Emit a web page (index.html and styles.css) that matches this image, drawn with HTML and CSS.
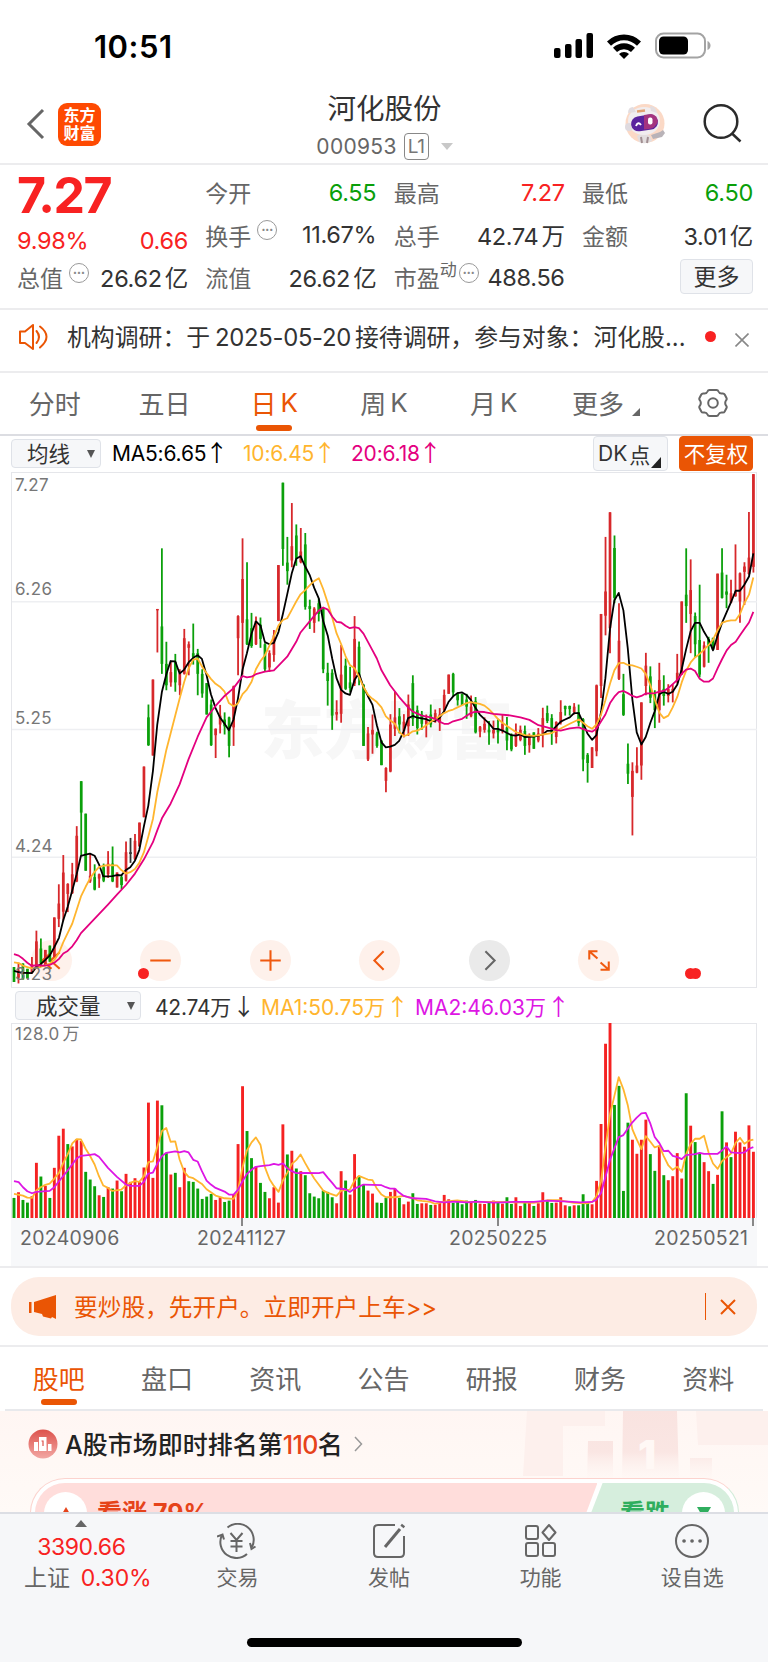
FILE: index.html
```html
<!DOCTYPE html>
<html lang="zh-CN">
<head>
    <meta charset="UTF-8">
    <meta name="viewport" content="width=device-width, initial-scale=1.0">
    <title>河化股份 000953</title>
    <link rel="stylesheet" href="styles.css">
</head>
<body>
    <!-- Status bar -->
    <div class="status-bar">
        <span class="status-time">10:51</span>
        <svg class="status-icons" width="160" height="28" viewBox="0 0 160 28">
            <rect x="3" y="17" width="6.500" height="10" rx="2"/>
            <rect x="14" y="13" width="6.500" height="14" rx="2"/>
            <rect x="24.500" y="8" width="6.500" height="19" rx="2"/>
            <rect x="35.500" y="2" width="6.500" height="25" rx="2"/>
            <path d="M56 10.500a24 24 0 0 1 34 0l-4 4.200a18.500 18.500 0 0 0-26 0z"/>
            <path d="M62 16.800a15.500 15.500 0 0 1 22 0l-4 4.200a10 10 0 0 0-14 0z"/>
            <path d="M68 23a7 7 0 0 1 10 0l-5 5z"/>
            <rect x="105" y="2.500" width="49" height="24" rx="7.500" fill="none" stroke="#a3a3a3" stroke-width="2"/>
            <rect x="108" y="5.500" width="29" height="18" rx="4.500"/>
            <path d="M156.500 10v9q3-1.500 3-4.500t-3-4.500z" fill="#a3a3a3"/>
        </svg>
    </div>

    <!-- Header -->
    <header class="header">
        <div class="header-left">
            <svg width="20" height="32" viewBox="0 0 20 32"><path d="M17 2L3 16l14 14" fill="none" stroke="#666" stroke-width="3"/></svg>
            <div class="logo"><span>东方</span><span>财富</span></div>
        </div>
        <div class="header-title">
            <div class="stock-name">河化股份</div>
            <div class="stock-code">000953 <span class="level">L1</span><i class="caret"></i></div>
        </div>
        <div class="header-right">
            <svg width="44" height="44" viewBox="0 0 44 44">
                <circle cx="22" cy="21.500" r="19.500" fill="#fbd9c6"/>
                <path d="M14 34q6-5 13 0l2 5q-7 4-13 1z" fill="#e3dedf"/>
                <path d="M28 33l9-3 3-2 2 3-3 4-9 2z" fill="#b9b3b8"/>
                <path d="M18 35l1 6m6-6l-1 6" stroke="#a18f92" stroke-width="2"/>
                <ellipse cx="21" cy="19" rx="16" ry="14" fill="#f1edef"/>
                <circle cx="6" cy="25" r="4" fill="#dfdadf"/>
                <path d="M5 11q0-6 5-6l3 5zM27 4q6 0 7 7l-6-2z" fill="#e3dde0"/>
                <rect x="8" y="13.500" width="27" height="15" rx="7.500" fill="#5a239e" transform="rotate(-9 21 21)"/>
                <path d="M21 13l7-1q6 1 7 7-2 7-9 8l-5 .5z" fill="#a4347f"/>
                <path d="M13 24q2-5 5-1" fill="none" stroke="#fff" stroke-width="2"/>
                <rect x="25" y="15.500" width="4.500" height="7" rx="2" fill="#fff"/>
                <path d="M14 9.500l8-1" stroke="#e2a070" stroke-width="2.500"/>
            </svg>
            <svg width="42" height="42" viewBox="0 0 42 42" fill="none" stroke="#2b2b2b" stroke-width="2.500"><circle cx="20" cy="18.500" r="16.300"/><path d="M31 30.500l8.500 8"/></svg>
        </div>
    </header>

    <!-- Quote -->
    <section class="quote">
        <div class="quote-main">
            <div class="price">7.27</div>
            <div class="cell up"><span>9.98%</span><span>0.66</span></div>
            <div class="cell"><label>总值<i class="tip">•••</i></label><span>26.62<b>亿</b></span></div>
        </div>
        <div class="quote-col">
            <div class="cell"><label>今开</label><span class="down">6.55</span></div>
            <div class="cell"><label>换手<i class="tip">•••</i></label><span>11.67%</span></div>
            <div class="cell"><label>流值</label><span>26.62<b>亿</b></span></div>
        </div>
        <div class="quote-col">
            <div class="cell"><label>最高</label><span class="up">7.27</span></div>
            <div class="cell"><label>总手</label><span>42.74<b>万</b></span></div>
            <div class="cell"><label>市盈<sup>动</sup><i class="tip near">•••</i></label><span>488.56</span></div>
        </div>
        <div class="quote-col">
            <div class="cell"><label>最低</label><span class="down">6.50</span></div>
            <div class="cell"><label>金额</label><span>3.01<b>亿</b></span></div>
            <div class="cell more-cell"><button class="more-btn">更多</button></div>
        </div>
    </section>

    <!-- News -->
    <div class="news">
        <svg width="32" height="28" viewBox="0 0 32 28" fill="none" stroke="#ea5504" stroke-width="2" stroke-linejoin="round"><path d="M2 8.500h5L15 2v24l-8-6H2z"/><path d="M18.500 8q5 6 0 12M22 3.500q13 10 0 21" stroke-linecap="round"/></svg>
        <p class="news-text">机构调研：于<span class="date">2025-05-20</span>接待调研，参与对象：河化股...</p>
        <i class="dot"></i>
        <svg width="14" height="14" viewBox="0 0 14 14"><path d="M.5.5l13 13m0-13l-13 13" stroke="#888" stroke-width="1.600"/></svg>
    </div>

    <!-- Period tabs -->
    <nav class="tabs">
        <a>分时</a><a>五日</a><a class="active">日<em>K</em></a><a>周<em>K</em></a><a>月<em>K</em></a>
        <a class="more-tab">更多<i class="corner"></i></a>
        <a><svg width="30" height="30" viewBox="0 0 30 30" fill="none" stroke="#666" stroke-width="2"><path d="M11.500 2h7q1.500 0 2 1.500 1 2.500 4 2 1.500-.2 2.200 1l1.800 3.500q.6 1.200-.4 2.300-1.800 2.700 0 5.400 1 1.100.4 2.300l-1.800 3.500q-.7 1.200-2.200 1-3-.5-4 2-.5 1.500-2 1.500h-7q-1.500 0-2-1.500-1-2.500-4-2-1.500.2-2.200-1L1.500 20q-.6-1.200.4-2.300 1.800-2.700 0-5.400-1-1.100-.4-2.300l1.800-3.500q.7-1.200 2.200-1 3 .5 4-2 .5-1.500 2-1.500z"/><circle cx="15" cy="15" r="4.800"/></svg></a>
    </nav>

    <!-- K line -->
    <div class="toolbar">
        <button class="select">均线<i class="arrow"></i></button>
        <span class="ma5">MA5:6.65<u>↑</u></span>
        <span class="ma10">10:6.45<u>↑</u></span>
        <span class="ma20">20:6.18<u>↑</u></span>
        <button class="dk">DK<b>点</b><i class="corner"></i></button>
        <button class="fq">不复权</button>
    </div>
    <div class="kline">
        <div class="watermark">东方财富</div>
        <div class="chart-actions">
            <i><svg viewBox="0 0 40 40"><path d="M20 12l-9 8 9 8M28 12l-9 8 9 8"/></svg></i>
            <i><svg viewBox="0 0 40 40"><path d="M10 20h20"/></svg></i>
            <i><svg viewBox="0 0 40 40"><path d="M10 20h20M20 10v20"/></svg></i>
            <i><svg viewBox="0 0 40 40"><path d="M24 11l-9 9 9 9"/></svg></i>
            <i class="disabled"><svg viewBox="0 0 40 40"><path d="M16 11l9 9-9 9"/></svg></i>
            <i><svg viewBox="0 0 40 40"><path d="M11 19v-8h8M11 11l8 7M30 21v8h-8M30 29l-8-7"/></svg></i>
        </div>
        <svg class="plot" id="kline" viewBox="34 32 2236 1444" preserveAspectRatio="none">
            <g class="grid"><path d="M34 396H2270M34 754H2270M34 1112H2270"/></g>
        </svg>
        <span class="y-label y1">7.27</span>
        <span class="y-label y2">6.26</span>
        <span class="y-label y3">5.25</span>
        <span class="y-label y4">4.24</span>
        <span class="y-label y5">3.23</span>
        <i class="event e1"></i><i class="event e2"></i><i class="event e3"></i>
    </div>

    <!-- Volume -->
    <div class="toolbar vol-bar">
        <button class="select wide">成交量<i class="arrow"></i></button>
        <span class="vol-now">42.74万<u>↓</u></span>
        <span class="vol-ma1">MA1:50.75万<u>↑</u></span>
        <span class="vol-ma2">MA2:46.03万<u>↑</u></span>
    </div>
    <div class="volume">
        <svg class="plot" id="volume" viewBox="34 127 2236 583" preserveAspectRatio="none"></svg>
        <span class="y-label">128.0<b>万</b></span>
    </div>
    <div class="dates">
        <span>20240906</span><span class="d2">20241127</span><span class="d3">20250225</span><span class="d4">20250521</span>
        <i class="tick t1"></i><i class="tick t2"></i><i class="tick t3"></i>
    </div>

    <!-- Promotion -->
    <div class="promo-wrap">
        <div class="promo">
            <svg width="28" height="26" viewBox="0 0 28 26" fill="#ea5504"><path d="M0 8h2.500v11H0zM5 8L27 1v24l-4-2-1 1.500-8-2-1-2.500-8-2z"/></svg>
            <span>要炒股，先开户。立即开户上车&gt;&gt;</span>
            <i class="promo-line"></i>
            <svg width="16" height="16" viewBox="0 0 16 16"><path d="M1 1l14 14M15 1L1 15" stroke="#ea5504" stroke-width="2"/></svg>
        </div>
    </div>

    <!-- Content tabs -->
    <nav class="tabs content-tabs">
        <a class="active">股吧</a><a>盘口</a><a>资讯</a><a>公告</a><a>研报</a><a>财务</a><a>资料</a>
    </nav>

    <section class="community">
        <svg class="podium" width="250" height="82" viewBox="0 0 250 82">
            <defs><linearGradient id="fade" x1="0" y1="0" x2="0" y2="82" gradientUnits="userSpaceOnUse"><stop offset="0" stop-color="#f9e3e0"/><stop offset=".5" stop-color="#fae6e3"/><stop offset=".85" stop-color="#fff8f5" stop-opacity=".3"/></linearGradient></defs>
            <path d="M9 0h78v15H45v50H5zM178 0h72v34h-70z" fill="#fdf0ed"/>
            <path d="M70 30h25v40H69zM105 0h54l2 70h-57zM172 47h22v24h-22z" fill="url(#fade)"/>
            <text x="120" y="58" class="podium-num">1</text>
        </svg>
        <div class="rank">
            <svg width="30" height="30" viewBox="0 0 30 30">
                <defs><linearGradient id="badge" x1="0" y1="0" x2="0" y2="1"><stop offset="0" stop-color="#dd524c"/><stop offset="1" stop-color="#f2a7a3"/></linearGradient></defs>
                <circle cx="15" cy="15" r="14.500" fill="url(#badge)"/>
                <path d="M6 13h4v9H6zM11 8h7.500v14H11zM20 15h3.500v7H20z" fill="#fff"/><path d="M13.500 12h1.500v5" fill="none" stroke="#dd524c" stroke-width="1.200"/>
            </svg>
            <span>A股市场即时排名第<em>110</em>名</span>
            <svg width="9" height="16" viewBox="0 0 9 16"><path d="M1 1l6.500 7L1 15" fill="none" stroke="#999" stroke-width="1.500"/></svg>
        </div>
        <div class="vote">
            <div class="vote-up"><i><svg width="14" height="12"><path d="M7 0l7 12H0z" fill="#e6431a"/></svg></i>看涨 79%</div>
            <div class="vote-down">看跌<i><svg width="14" height="12"><path d="M0 0h14L7 12z" fill="#2fae5e"/></svg></i></div>
        </div>
    </section>

    <!-- Bottom bar -->
    <footer class="bottom-bar">
        <div class="index">
            <i class="index-arrow"></i>
            <div class="up">3390.66</div>
            <div class="index-name"><b>上证</b><span class="up">0.30%</span></div>
        </div>
        <div class="action">
            <svg viewBox="0 0 40 36"><path d="M10.500 4.500A16 16 0 0 1 35 24M30 31A16 16 0 0 1 5 12M0 13.500l5.500-2 1.500 5M33 20l1.500 6 4-2.500"/><path d="M13.500 10l6 7 6-7M19.500 17v12M13.500 18h12M13.500 23.500h12"/></svg>
            <span>交易</span>
        </div>
        <div class="action">
            <svg viewBox="0 0 40 36"><path d="M26 2H9q-4 0-4 4v24q0 4 4 4h22q4 0 4-4V13"/><path d="M16 24l15-18" stroke-width="3"/><path d="M33 4l1.500-2" stroke-width="4"/></svg>
            <span>发帖</span>
        </div>
        <div class="action">
            <svg viewBox="0 0 40 36"><rect x="5" y="3" width="12" height="13" rx="2"/><rect x="5" y="20" width="12" height="13" rx="2"/><rect x="22" y="20" width="12" height="13" rx="2"/><path d="M28 2l6.500 7.500L28 17l-6.500-7.500z" stroke-linejoin="round"/></svg>
            <span>功能</span>
        </div>
        <div class="action">
            <svg viewBox="0 0 40 36"><circle cx="20" cy="18" r="16"/><path d="M12 18h.1M20 18h.1M28 18h.1" stroke-width="3.600" stroke-linecap="round"/></svg>
            <span>设自选</span>
        </div>
        <i class="home-indicator"></i>
    </footer>

    <script src="chart.js"></script>
</body>
</html>
```

FILE: styles.css
```css
* {
    box-sizing: border-box;
}

body {
    margin: 0;
    width: 768px;
    height: 1662px;
    overflow: hidden;
    background-color: #fff;
    color: #333;
    font-family: Inter, "Noto Sans CJK SC", sans-serif;
    font-size: 23px;
}

i, em, u, b {
    font-style: normal;
    font-weight: inherit;
    text-decoration: none;
}

button {
    font-family: inherit;
    color: #333;
    background-color: #f6f7f9;
    border: 1px solid #dfe2e8;
    border-radius: 4px;
    padding: 0;
}

svg {
    display: block;
    flex: none;
}

.up {
    color: #f82222;
}

.down {
    color: #0a9f0a;
}

/* Status bar */
.status-bar {
    height: 90px;
    display: flex;
    align-items: flex-start;
    justify-content: space-between;
    padding: 28px 57px 0 94px;
    color: #000;
}

.status-time {
    font-size: 31px;
    font-weight: 600;
    line-height: 37px;
    letter-spacing: 0.5px;
}

.status-icons {
    margin-top: 3px;
}

/* Header */
.header {
    height: 75px;
    display: flex;
    justify-content: space-between;
    border-bottom: 2px solid #ececee;
    padding: 0 25px 0 26px;
}

.header-left, .header-right {
    width: 130px;
    display: flex;
    align-items: center;
    height: 68px;
}

.header-left {
    gap: 12px;
}

.header-right {
    justify-content: flex-end;
    gap: 34px;
}

.logo {
    width: 43px;
    height: 43px;
    border-radius: 9px;
    background-color: #fe4a02;
    color: #fff;
    font-size: 16px;
    font-weight: 700;
    line-height: 18px;
    display: flex;
    flex-direction: column;
    align-items: center;
    justify-content: center;
}

.header-title {
    text-align: center;
}

.stock-name {
    font-size: 28.500px;
    line-height: 38px;
}

.stock-code {
    display: flex;
    align-items: center;
    justify-content: center;
    font-size: 21px;
    line-height: 27px;
    color: #666;
    margin-top: 5px;
    letter-spacing: 0.3px;
}

.level {
    border: 1.500px solid #888;
    border-radius: 4px;
    width: 25px;
    height: 27px;
    line-height: 25px;
    font-size: 19px;
    letter-spacing: -0.5px;
    margin-left: 7px;
    color: #777;
}

.caret {
    border: 6px solid transparent;
    border-top: 7px solid #c8c8c8;
    border-bottom: 0;
    margin-left: 12px;
}

/* Quote */
.quote {
    height: 145px;
    border-bottom: 2px solid #ececee;
    padding: 6px 15px 0 17px;
    display: grid;
    grid-template-columns: repeat(4, 171px);
    justify-content: space-between;
}

.cell {
    height: 42.500px;
    display: flex;
    align-items: center;
    justify-content: space-between;
    white-space: nowrap;
}

.cell > span {
    font-size: 23.500px;
    letter-spacing: -0.3px;
}

.cell label {
    color: #666;
    display: flex;
    align-items: center;
    letter-spacing: 0;
}

.cell b {
    margin-left: 3px;
}

.cell sup {
    font-size: 17px;
    line-height: 17px;
    margin-top: -14px;
}

.price {
    height: 49px;
    line-height: 49px;
    font-size: 50px;
    font-weight: 700;
    letter-spacing: -1.5px;
    color: #f82222;
}

.quote-main .up {
    height: 36px;
    padding-top: 5px;
}

.tip {
    width: 20px;
    height: 20px;
    border: 1.500px solid #999;
    border-radius: 50%;
    font-size: 7px;
    line-height: 17px;
    text-align: center;
    color: #888;
    margin: -9px 0 0 6px;
}

.tip.near {
    margin-left: 2px;
}

.more-cell {
    justify-content: flex-end;
}

.more-btn {
    width: 73px;
    height: 35px;
    font-size: 23px;
    line-height: 30px;
    margin-top: -1px;
}

/* News */
.news {
    height: 63px;
    border-bottom: 2px solid #ececee;
    display: flex;
    align-items: center;
    padding: 0 19px 8px 18px;
}

.news-text {
    margin: -2px 0 0 17px;
    width: 620px;
    font-size: 23.850px;
    white-space: nowrap;
}

.date {
    margin: 0 4px 0 5px;
    letter-spacing: -0.3px;
}

.dot {
    width: 11px;
    height: 11px;
    border-radius: 50%;
    background-color: #f82222;
    margin: 0 auto 0 18px;
}

.news svg:last-child {
    margin-top: 7px;
}

/* Tabs */
.tabs {
    height: 63px;
    border-bottom: 2px solid #dcdde2;
    display: grid;
    grid-template-columns: repeat(7, 1fr);
    font-size: 26px;
    color: #666;
}

.tabs a {
    position: relative;
    display: flex;
    align-items: center;
    justify-content: center;
    padding-bottom: 2px;
}

.tabs em {
    margin-left: 4px;
}

.tabs .more-tab {
    padding-left: 5px;
}

.tabs .active {
    color: #ea5504;
}

.tabs .active::after {
    content: "";
    position: absolute;
    left: calc(50% - 18px);
    bottom: 3px;
    width: 36px;
    height: 6px;
    border-radius: 3px;
    background-color: #ea5504;
}

.corner {
    align-self: flex-end;
    border-left: 8px solid transparent;
    border-bottom: 8px solid #666;
    margin: 0 0 16px 8px;
}

/* Toolbars */
.toolbar {
    height: 36px;
    display: flex;
    align-items: center;
    padding: 0 15px 1px 11px;
    font-size: 21px;
    white-space: nowrap;
    letter-spacing: -0.2px;
}

.toolbar u {
    display: inline-block;
    width: 21px;
    margin-left: -1px;
    font-family: "Noto Sans CJK SC", sans-serif;
    font-size: 23px;
    line-height: 20px;
}

.select {
    width: 90px;
    height: 29px;
    font-size: 21.500px;
    line-height: 26px;
    display: flex;
    align-items: center;
    justify-content: space-between;
    padding: 0 5px 0 15px;
    margin-right: 11px;
}

.arrow {
    border: 4px solid transparent;
    border-top: 8px solid #555;
    border-bottom: 0;
}

.ma5 {
    color: #000;
    width: 131px;
}

.ma10 {
    color: #ffb52e;
    width: 108px;
}

.ma20 {
    color: #e4007f;
}

.dk {
    margin-left: auto;
    width: 75px;
    height: 35px;
    font-size: 21px;
    display: flex;
    align-items: center;
    padding-left: 4px;
}

.dk b {
    margin-left: 2px;
}

.dk .corner {
    border-left-width: 10px;
    border-bottom: 11px solid #222;
    margin: 0 0 2px 1px;
}

.fq {
    width: 74px;
    height: 35px;
    margin-left: 11px;
    background-color: #ea5504;
    border-color: #ea5504;
    color: #fff;
    font-size: 21.500px;
    line-height: 30px;
}

.vol-bar {
    height: 35px;
    padding: 0 15px;
}

.select.wide {
    width: 126px;
    height: 29px;
    padding-left: 20px;
    margin-right: 14px;
}

.vol-bar u {
    margin-left: 1px;
}

.vol-now {
    width: 106px;
}

.vol-ma1 {
    color: #ffb52e;
    width: 154px;
    letter-spacing: 0;
}

.vol-ma2 {
    color: #dd16e4;
    letter-spacing: 0;
}

/* Charts */
.kline, .volume {
    position: relative;
    margin: 0 11px;
    border: 1px solid #e5e6ea;
    height: 516px;
}

.volume {
    height: 195px;
    border-bottom: 0;
}

.plot {
    position: absolute;
    left: 0;
    top: -1px;
    width: 745px;
    height: calc(100% + 1px);
}

.plot path {
    fill: none;
    vector-effect: non-scaling-stroke;
    stroke-linejoin: round;
}

.grid {
    stroke: #eeeff2;
    stroke-width: 1.500px;
}

.y-label {
    position: absolute;
    left: 3px;
    top: 2px;
    font-size: 17px;
    line-height: 20px;
    color: #777;
    letter-spacing: 0.4px;
}

.volume .y-label {
    top: 0;
}

.y-label b {
    margin-left: 3px;
}

.y-label.y2 { top: 106px; }
.y-label.y3 { top: 235px; }
.y-label.y4 { top: 363px; }
.y-label.y5 { top: 491px; }

.watermark {
    position: absolute;
    left: 249px;
    top: 212px;
    font-size: 63px;
    line-height: 90px;
    font-weight: 900;
    color: #f7f7f7;
}

.chart-actions {
    position: absolute;
    left: 19px;
    bottom: 6px;
    width: 588px;
    display: flex;
    justify-content: space-between;
}

.chart-actions i {
    width: 41px;
    height: 41px;
    border-radius: 50%;
    background-color: #fef1eb;
}

.chart-actions path {
    fill: none;
    stroke: #f0590f;
    stroke-width: 2px;
}

.chart-actions .disabled {
    background-color: #eaeaea;
}

.chart-actions .disabled path {
    stroke: #666;
}

.event {
    position: absolute;
    left: 126px;
    top: 495px;
    width: 11px;
    height: 11px;
    border-radius: 50%;
    background-color: #f82222;
}

.e2 { left: 673px; }
.e3 { left: 678px; }

.dates {
    position: relative;
    height: 48px;
    margin: 0 11px;
    background-color: #f7f8fa;
    display: flex;
    padding: 8px 0 0 9px;
    font-size: 19.500px;
    line-height: 24px;
    letter-spacing: 0.3px;
    color: #666;
}

.dates span {
    width: 177px;
}

.dates .d2 {
    width: 252px;
}

.dates .d3 {
    width: 205px;
}

.dates .d4 {
    width: auto;
}

.tick {
    position: absolute;
    left: 230px;
    top: 0;
    width: 1.500px;
    height: 8px;
    background-color: #888;
}

.t2 { left: 486px; }
.t3 { left: 741px; }

/* Promotion */
.promo-wrap {
    height: 81px;
    border-top: 2px solid #ececee;
    border-bottom: 2px solid #ececee;
    padding: 9px 11px;
}

.promo {
    height: 59px;
    border-radius: 28px;
    background-color: #fdece4;
    color: #ea5504;
    display: flex;
    align-items: center;
    padding: 0 21px 0 18px;
}

.promo span {
    margin: -2px 0 0 17px;
    font-size: 23.700px;
}

.promo-line {
    width: 1.500px;
    height: 27px;
    background-color: #ea5504;
    margin: 0 14px 0 auto;
}

/* Content tabs */
.content-tabs {
    margin: 0 5px;
    height: 64px;
    border-color: #e8e9ec;
}

.content-tabs a {
    padding: 0 1px 1px 0;
}

.content-tabs .active::after {
    bottom: 4px;
}

/* Community */
.community {
    position: relative;
    height: 101px;
    overflow: hidden;
    background: linear-gradient(#fff6f3, #fffaf7);
    padding: 18px 29px 0 28px;
}

.podium {
    position: absolute;
    right: 0;
    top: 0;
}

.podium-num {
    font-size: 40px;
    font-weight: 900;
    fill: #fff8f5;
}

.rank {
    display: flex;
    align-items: center;
    height: 30px;
    font-size: 25px;
    font-weight: 500;
    color: #222;
}

.rank span {
    margin: -2px 11px 0 7px;
}

.rank em {
    color: #e6431a;
    letter-spacing: -0.6px;
}

.vote {
    position: relative;
    margin: 19px 0 0 2px;
    height: 70px;
    border: 1.500px solid #fcd3ce;
    border-right-color: #d2ecd9;
    border-radius: 35px;
    padding: 4px;
    background-color: #fff;
    display: flex;
    font-size: 25px;
    line-height: 58px;
    font-weight: 700;
}

.vote i {
    width: 43px;
    height: 43px;
    border-radius: 50%;
    background-color: #fff;
    display: flex;
    align-items: center;
    justify-content: center;
}

.vote-up {
    width: 564px;
    height: 60px;
    border-radius: 30px 0 0 30px;
    background-color: #ffdddb;
    color: #e6431a;
    display: flex;
    align-items: center;
    gap: 10px;
    padding-left: 9px;
    clip-path: polygon(0 0, 100% 0, 96% 100%, 0 100%);
}

.vote-down {
    width: 155px;
    height: 60px;
    margin-left: -18px;
    border-radius: 0 30px 30px 0;
    background-color: #d6eedd;
    color: #2fae5e;
    display: flex;
    align-items: center;
    justify-content: flex-end;
    gap: 12px;
    padding-right: 9px;
    clip-path: polygon(15% 0, 100% 0, 100% 100%, 0 100%);
}

/* Bottom bar */
.bottom-bar {
    position: relative;
    height: 150px;
    border-top: 2px solid #dcdee4;
    background-color: #f6f7f9;
    display: flex;
    padding-left: 15px;
}

.index {
    width: 147px;
    text-align: center;
    line-height: 31px;
    font-size: 23px;
    letter-spacing: -0.4px;
    padding-right: 14px;
}

.index-name {
    margin-right: -13px;
    letter-spacing: -0.1px;
}

.index b {
    color: #666;
    margin-right: 11px;
}

.index-arrow {
    display: block;
    width: 0;
    margin: 6px auto 5px;
    border: 6px solid transparent;
    border-top: 0;
    border-bottom: 7px solid #666;
}

.action {
    width: 152px;
    display: flex;
    flex-direction: column;
    align-items: center;
    padding-top: 9px;
    font-size: 21px;
    line-height: 30px;
    color: #666;
}

.action svg {
    width: 40px;
    height: 36px;
    fill: none;
    stroke: #666;
    stroke-width: 2;
    margin-bottom: 4px;
}

.home-indicator {
    position: absolute;
    left: 247px;
    bottom: 15px;
    width: 275px;
    height: 9px;
    border-radius: 5px;
    background-color: #000;
}
```

FILE: chart.js
```js
const RED = '#d7282b';
const GREEN = '#0ba00b';
const STEP = 13.45;
const START = 40;

// one day per item: color high low [open/close top, bottom]
const candles = `g 1420 1462,r 1408 1466 1430 1450,g 1410 1455,g 1425 1452,r 1392 1438 1412 1436,r 1318 1425 1348 1420,
g 1340 1420 1368 1410,r 1372 1415,g 1360 1405,r 1281 1392,r 1188 1308 1242 1285,r 1106 1290 1155 1265,r 1185 1266 1187 1215,
r 1128 1215 1160 1213,r 1025 1182 1052 1180,g 899 1108 899 987,g 990 1150,r 1102 1184 1164 1180,g 1132 1205 1168 1203,
r 1158 1198 1160 1172,g 1130 1182 1140 1178,r 1095 1170 1130 1160,g 1082 1182 1130 1180,r 1155 1197,g 1162 1202 1168 1190,
r 1068 1180 1098 1178,k 1058 1128 1098 1103,r 1047 1120 1066 1118,r 1015 1082,r 858 1000,g 684 800 720 798,r 614 827,
r 416 538 416 420,g 246 598 465 570,g 508 644 570 630,r 562 634 593 622,g 542 648 565 622,r 585 658 597 630,r 472 600 498 598,
r 507 602 515 525,g 457 572 540 552,g 528 658 540 598,g 585 665 598 653,g 624 712,g 670 800 684 798,r 751 834 752 770,
r 685 765 715 740,g 706 768 726 745,g 718 832 720 800,r 631 800 633 748,r 434 602 436 498,r 218 600 332 455,g 285 517 445 515,
g 427 525 470 520,r 437 517 450 515,g 440 525 460 500,g 512 590 515 585,r 532 592 540 580,r 475 564 490 545,r 293 450,
g 62 295 62 248,g 214 348 286 310,r 119 299 240 280,g 179 295 210 275,r 189 288 255 285,g 203 418 235 410,g 390 472 408 416,
r 411 483 415 455,g 387 451 400 430,g 412 596 415 585,g 567 687 595 618,g 585 755 595 715,r 672 729 705 712,r 517 735 600 710,
g 555 643 575 640,g 578 650 622 638,r 436 632 500 625,g 507 630 522 605,g 628 800,r 747 842 765 838,r 712 822 755 768,
g 760 805 765 800,g 785 854,r 860 930 862 898,r 711 874 740 872,r 648 772 720 752,g 694 765 717 740,r 711 776 732 758,
r 656 772 684 745,g 602 744 624 724,g 687 768 700 750,g 702 755 712 738,r 712 776 728 740,g 684 748 712 740,r 698 735 708 722,
r 694 758 712 735,r 642 705 657 700,r 600 654,g 595 660 598 650,g 650 687 655 672,g 654 685,g 654 724 670 690,r 659 720 690 717,
g 663 765 675 762,r 744 776 746 760,r 720 763 738 755,g 730 797 755 762,r 729 779 755 765,g 725 793 752 762,r 712 765 738 758,
g 719 812 748 785,g 765 815 770 810,r 737 803 765 800,r 743 787 755 783,g 743 825 758 800,r 765 819 770 798,g 762 808,
r 750 790 765 785,r 693 804 722 765,g 687 736 708 730,g 711 797 722 765,r 731 793 733 775,r 672 740 705 735,g 687 715 688 697,
g 687 715 688 697,r 680 712 690 705,g 684 745 705 735,g 722 871 725 838,g 820 903 825 848,r 804 862,r 628 829 630 815,
r 430 666 430 632,r 214 490 367 435,r 145 540 145 470,g 210 400 245 385,r 400 615 505 612,g 598 716 655 713,g 793 907 850 878,
r 846 1051 870 943,r 804 877 855 875,r 678 895 678 855,r 539 658 575 632,g 577 680 605 665,g 644 750 655 700,r 567 735 615 700,
g 602 687 640 660,r 627 678 640 660,r 627 678 640 650,r 542 625 595 620,r 395 600,g 246 455 376 408,r 277 540 363 430,
g 426 552 436 515,g 348 608 503 600,r 507 580 518 578,g 494 567 500 520,g 497 530,r 317 531,g 246 387 314 385,g 320 414 367 376,
r 334 400 372 398,r 235 382 367 380,r 314 455 316 395,r 285 405 297 312,r 144 320 272 318,r 38 314 38 298`;

const volumes = `650g 633r 656g 664g 645r 545r 586g 614r 650g 560r 464r 443r 489g 496r 474r 480r 572g 595g 615g 642r
647g 618r 622g 598r 630g 578r 602r 591r 602r 559r 365r 590r 359r 373g 516g 580r 575g 618r 560r 600g
602g 622g 653g 646g 638g 656r 648r 662g 658g 640r 489r 316r 450g 531g 556r 605g 632g 651r 618r 664r
430r 520g 509r 562g 570r 582g 636g 646g 651g 628g 632g 648g 666r 570r 598g 640r 519r 585g 610g 628r
637r 664g 665g 650g 632r 622r 650g 669r 661r 636g 668g 666r 666r 671g 671r 665r 641r 654r 665g 660g
669g 658g 662r 656g 667r 668r 664g 658r 664g 667r 648g 668g 648r 674r 662g 664r 674g 666r 633r 658g
665g 664r 648r 672r 675g 672r 672g 639g 664g 669r 599r 429r 189r 127r 372g 315g 629g 425g 476r 518r
476r 416r 519g 569g 496r 582g 597r 585r 516r 592r 337g 434r 483g 518g 543r 570r 608g 581r 391g 484r
528g 452r 484r 497r 433r 512r`;

const ma5 = '40,1431 54,1434 67,1436 94,1437 107,1420 120,1412 134,1400 147,1388 160,1366 175,1338 188,1288 201,1252 215,1205 228,1160 241,1108 255,1105 268,1102 282,1108 295,1132 308,1166 322,1166 335,1165 349,1162 362,1163 376,1148 389,1140 403,1122 416,1092 430,1025 443,968 457,870 470,740 484,648 497,600 510,562 524,563 537,597 551,586 564,566 578,553 591,546 604,556 618,602 631,655 645,694 658,720 672,738 685,756 699,726 712,668 726,586 739,540 753,485 766,451 780,463 793,509 807,515 820,511 834,480 847,430 860,375 874,315 887,275 900,268 914,297 928,322 941,357 955,387 968,450 982,492 995,555 1008,610 1022,643 1035,653 1048,657 1062,615 1075,596 1089,635 1102,660 1116,685 1129,742 1143,790 1156,804 1169,802 1183,797 1196,786 1210,758 1223,722 1237,716 1250,721 1264,723 1277,725 1290,731 1304,730 1317,722 1331,703 1344,677 1358,661 1371,652 1385,650 1398,657 1411,671 1425,693 1438,712 1452,725 1465,736 1479,752 1492,752 1506,757 1520,764 1533,770 1546,771 1560,768 1573,775 1600,774 1614,771 1627,768 1640,758 1654,757 1667,745 1681,732 1694,726 1708,720 1721,708 1735,708 1748,735 1761,765 1775,783 1788,770 1802,705 1815,610 1829,470 1842,392 1855,371 1869,420 1882,525 1896,670 1909,762 1923,796 1936,775 1950,735 1963,703 1977,655 1990,648 2004,654 2017,648 2031,628 2044,585 2057,530 2071,478 2084,455 2098,455 2111,480 2125,502 2138,532 2152,490 2165,455 2179,425 2192,397 2206,365 2219,365 2232,348 2246,325 2259,260';
const ma10 = '40,1407 54,1409 67,1416 80,1420 94,1424 120,1420 134,1415 147,1410 161,1400 175,1380 188,1350 201,1325 215,1298 228,1260 241,1222 255,1195 268,1172 282,1153 295,1140 308,1136 322,1134 349,1135 362,1148 376,1158 389,1154 403,1145 416,1128 430,1098 443,1055 457,1005 470,930 484,870 497,812 510,765 524,715 537,668 551,620 564,583 578,558 591,555 604,577 618,596 631,612 645,626 658,634 672,648 685,680 699,689 712,681 726,655 739,642 753,620 766,585 780,562 793,546 807,518 820,493 834,462 847,447 860,442 874,418 887,395 900,375 914,363 928,349 941,338 955,330 968,360 982,400 995,440 1008,484 1022,515 1035,548 1048,573 1062,582 1075,605 1089,635 1102,656 1116,668 1129,677 1143,692 1156,717 1169,728 1183,738 1196,760 1210,773 1223,768 1237,759 1250,757 1264,751 1277,742 1290,733 1304,725 1317,717 1331,708 1344,702 1358,698 1371,692 1385,686 1398,680 1411,677 1438,682 1452,687 1465,697 1479,710 1492,724 1506,735 1524,747 1546,761 1573,770 1600,772 1627,768 1654,764 1681,751 1708,738 1735,726 1748,735 1761,745 1775,752 1788,740 1802,712 1815,672 1829,625 1842,588 1855,568 1869,567 1882,573 1896,574 1909,578 1923,583 1936,598 1950,630 1963,670 1977,707 1990,722 2004,715 2017,692 2031,662 2044,622 2057,590 2071,566 2084,552 2098,542 2111,530 2125,517 2138,502 2152,475 2165,455 2179,450 2192,448 2206,448 2219,430 2232,400 2246,376 2259,328';
const ma20 = '40,1384 54,1388 67,1397 80,1408 94,1417 107,1415 134,1416 147,1414 161,1408 175,1397 188,1382 201,1375 215,1362 228,1345 241,1325 268,1298 295,1272 322,1245 349,1217 376,1190 403,1158 430,1118 457,1070 470,1037 484,1003 510,962 537,908 564,837 591,775 618,720 645,688 672,660 699,638 726,604 739,608 753,606 766,599 793,592 820,588 834,575 860,550 887,508 900,482 928,450 955,420 968,412 982,418 995,437 1008,452 1022,454 1035,463 1048,470 1062,467 1075,470 1089,485 1116,532 1129,555 1143,588 1169,630 1196,663 1223,692 1237,704 1264,715 1290,720 1304,724 1317,732 1331,738 1344,738 1358,731 1385,724 1411,708 1425,704 1452,705 1479,710 1524,714 1560,720 1587,727 1614,742 1640,748 1667,756 1681,757 1708,751 1735,748 1761,757 1775,760 1788,752 1815,712 1829,680 1842,662 1855,649 1869,646 1882,652 1896,660 1909,664 1923,660 1936,653 1963,652 1977,648 1990,646 2004,638 2031,615 2044,598 2057,586 2071,583 2084,590 2098,612 2111,620 2125,620 2138,611 2152,582 2165,557 2179,532 2192,517 2206,508 2219,490 2232,472 2246,454 2259,424';

const volMa1 = '40,638 67,643 80,649 94,650 107,628 120,618 134,611 147,607 161,592 175,575 188,545 201,520 215,487 228,474 241,475 255,503 268,524 282,550 295,585 308,613 322,620 335,629 362,625 376,612 389,605 403,600 416,602 430,585 443,543 457,541 470,498 484,450 497,441 510,482 524,481 537,535 551,572 564,587 578,591 604,608 618,624 645,643 672,651 699,653 712,628 726,558 739,508 753,484 766,469 780,492 793,558 807,594 820,614 834,632 847,598 860,575 874,548 887,537 900,520 914,546 928,570 941,592 968,628 982,635 1008,644 1022,628 1048,625 1062,598 1075,584 1102,595 1116,597 1129,622 1143,640 1156,648 1183,648 1210,644 1223,648 1237,650 1250,657 1264,659 1290,662 1304,668 1331,661 1370,657 1400,661 1480,662 1540,663 1600,665 1640,657 1680,657 1720,665 1760,666 1775,662 1788,645 1802,600 1815,500 1829,400 1842,345 1855,289 1869,325 1882,372 1896,445 1909,475 1923,504 1936,465 1950,482 1963,499 1977,494 1990,525 2004,553 2017,566 2031,557 2044,572 2057,520 2071,488 2084,473 2098,473 2111,464 2125,515 2138,547 2152,563 2165,540 2179,528 2192,517 2206,485 2219,470 2232,488 2246,479 2259,476';
const volMa2 = '40,600 54,603 67,618 80,630 94,636 107,632 147,629 161,618 175,600 201,568 228,532 241,524 268,521 282,519 295,527 322,560 349,587 376,610 389,614 416,614 430,602 443,577 457,574 470,548 484,525 497,515 524,511 537,514 551,510 564,514 578,536 591,541 604,570 618,598 631,610 645,620 672,631 685,640 699,640 712,626 726,600 739,578 753,566 766,557 780,555 807,552 820,548 834,551 847,547 860,561 874,570 887,576 914,575 955,576 968,573 982,590 995,605 1008,621 1035,624 1048,632 1062,622 1089,610 1143,612 1156,618 1169,622 1183,622 1196,634 1210,644 1237,651 1277,653 1304,660 1331,663 1360,661 1400,663 1430,661 1480,664 1540,662 1600,662 1640,658 1690,660 1740,663 1775,662 1788,655 1802,635 1815,588 1829,535 1842,502 1855,468 1869,462 1882,443 1896,424 1909,410 1923,397 1936,396 1950,428 1963,468 1977,486 1990,510 2004,509 2017,524 2031,528 2044,534 2057,522 2084,519 2098,515 2111,518 2152,518 2165,508 2179,496 2192,514 2219,516 2232,514 2246,503 2259,498';

// Draw one svg path
function drawPath(svg, d, color, width) {
    const path = document.createElementNS('http://www.w3.org/2000/svg', 'path');
    path.setAttribute('d', d);
    path.setAttribute('stroke', color);
    path.setAttribute('stroke-width', width);
    svg.appendChild(path);
}

const kline = document.getElementById('kline');
const volume = document.getElementById('volume');

candles.split(',').forEach((item, i) => {
    const [type, high, low, top = high, bottom = low] = item.trim().split(' ');
    const color = type === 'r' ? RED : type === 'g' ? GREEN : '#333';
    const x = START + STEP * i;
    drawPath(kline, `M${x} ${high}V${low}`, color, 1.8);
    drawPath(kline, `M${x} ${top}V${bottom}`, color, 2.7);
});

volumes.split(/\s+/).forEach((item, i) => {
    const x = START + STEP * i;
    drawPath(volume, `M${x} ${parseInt(item)}V710`, item.endsWith('r') ? '#f52222' : GREEN, 2.9);
});

drawPath(kline, 'M' + ma5, '#000', 1.8);
drawPath(kline, 'M' + ma10, '#ffb52e', 1.8);
drawPath(kline, 'M' + ma20, '#e4007f', 1.8);
drawPath(volume, 'M' + volMa1, '#ffb52e', 1.8);
drawPath(volume, 'M' + volMa2, '#dd16e4', 1.8);
```
